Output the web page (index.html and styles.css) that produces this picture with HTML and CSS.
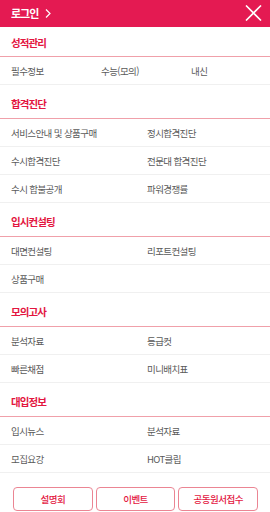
FILE: index.html
```html
<!DOCTYPE html>
<html lang="ko">
<head>
  <meta charset="UTF-8">
  <meta name="viewport" content="width=device-width, initial-scale=1.0">
  <title>메뉴</title>
  <link rel="stylesheet" href="styles.css">
</head>
<body>

  <!-- Top bar -->
  <header class="topbar">
    <a class="login" href="#">로그인
      <svg class="chev" width="6" height="9" viewBox="0 0 6 9">
        <path d="M1 0.5 L5 4.5 L1 8.5" stroke="#fff" stroke-width="1.2" fill="none"/>
      </svg>
    </a>
    <button class="close" aria-label="닫기">
      <svg width="17" height="16" viewBox="0 0 17 16">
        <path d="M1 0.5 L16 15.5 M16 0.5 L1 15.5" stroke="#fff" stroke-width="1.6" fill="none"/>
      </svg>
    </button>
  </header>

  <section class="menu first">
    <h2 class="menu-title">성적관리</h2>
    <ul class="menu-list cols3">
      <li>필수정보</li>
      <li>수능(모의)</li>
      <li>내신</li>
    </ul>
  </section>

  <section class="menu">
    <h2 class="menu-title">합격진단</h2>
    <ul class="menu-list">
      <li>서비스안내 및 상품구매</li>
      <li>정시합격진단</li>
      <li>수시합격진단</li>
      <li>전문대 합격진단</li>
      <li>수시 합불공개</li>
      <li>파워경쟁률</li>
    </ul>
  </section>

  <section class="menu">
    <h2 class="menu-title">입시컨설팅</h2>
    <ul class="menu-list">
      <li>대면컨설팅</li>
      <li>리포트컨설팅</li>
      <li>상품구매</li>
      <li></li>
    </ul>
  </section>

  <section class="menu">
    <h2 class="menu-title">모의고사</h2>
    <ul class="menu-list">
      <li>분석자료</li>
      <li>등급컷</li>
      <li>빠른채점</li>
      <li>미니배치표</li>
    </ul>
  </section>

  <section class="menu">
    <h2 class="menu-title">대입정보</h2>
    <ul class="menu-list">
      <li>입시뉴스</li>
      <li>분석자료</li>
      <li>모집요강</li>
      <li>HOT클립</li>
    </ul>
  </section>

  <div class="bottom-btns">
    <button>설명회</button>
    <button>이벤트</button>
    <button>공동원서접수</button>
  </div>

</body>
</html>
```

FILE: styles.css
```css
body {
  margin: 0;
  padding: 0;
  background-color: #fff;
  font-family: "Noto Sans CJK KR", "Noto Sans", "Liberation Sans", sans-serif;
  color: #555;
}

/* Top bar */
.topbar {
  height: 27px;
  background-color: #e41a52;
  display: flex;
  align-items: center;
  justify-content: space-between;
  padding: 0 8px 0 11px;
}

.login {
  color: #fff;
  text-decoration: none;
  font-size: 11px;
  font-weight: bold;
  line-height: 13px;
  letter-spacing: -1px;
  display: flex;
  align-items: center;
}

.chev {
  margin-left: 7px;
}

.close {
  background: none;
  border: none;
  padding: 0;
  display: flex;
  margin-top: -1px;
}

/* Menu sections */
.menu-title {
  margin: 0;
  height: 34px;
  box-sizing: border-box;
  display: flex;
  align-items: flex-end;
  padding: 0 0 8px 11px;
  font-size: 10.5px;
  line-height: 13px;
  letter-spacing: -0.9px;
  font-weight: bold;
  color: #e3163f;
  border-bottom: 1px solid #f0a0aa;
}

.menu.first .menu-title {
  height: 30px;
  padding-bottom: 7px;
}

.menu-list {
  list-style: none;
  margin: 0;
  padding: 0;
  display: grid;
  grid-template-columns: 136px 1fr;
}

.menu-list.cols3 {
  grid-template-columns: 90px 90px 1fr;
}

.menu-list li {
  height: 28px;
  box-sizing: border-box;
  display: flex;
  align-items: center;
  padding-left: 11px;
  font-size: 9.5px;
  letter-spacing: -0.6px;
  color: #5a5a5a;
  border-bottom: 1px solid #f0f0f0;
}

/* Bottom buttons */
.bottom-btns {
  display: flex;
  gap: 3px;
  padding: 14px 12px 0 13px;
}

.bottom-btns button {
  width: 80px;
  height: 24px;
  background: #fff;
  border: 1px solid #eb8593;
  border-radius: 4px;
  color: #e3163f;
  font-family: inherit;
  font-size: 9.5px;
  font-weight: 500;
  letter-spacing: -0.5px;
  padding: 0;
}
```
